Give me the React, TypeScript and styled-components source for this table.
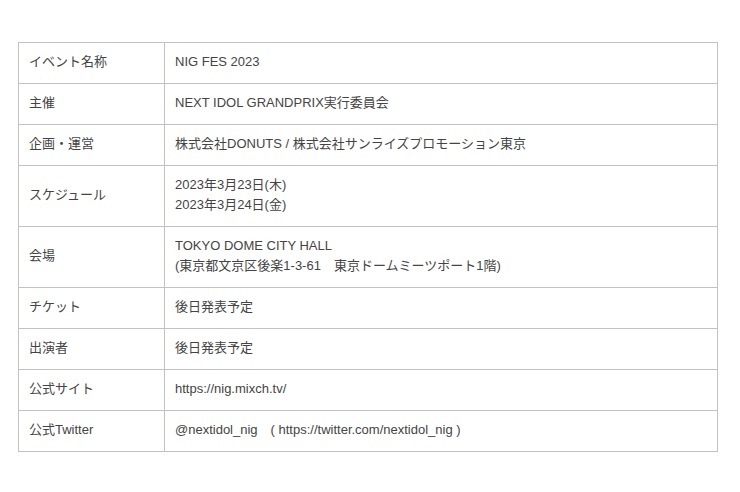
import React from 'react'
import styled, { createGlobalStyle } from 'styled-components'

const GlobalStyle = createGlobalStyle`
    html, body {
        margin: 0;
        padding: 0;
        background: #ffffff;
    }
    body {
        font-family: "Liberation Sans", Arial, "Noto Sans CJK JP", sans-serif;
        color: #444444;
    }
`

const Page = styled.div`
    padding: 42px 22px 0 18px;
`

const InfoTable = styled.table`
    width: 700px;
    border-collapse: collapse;
    font-size: 13px;
    line-height: 20px;
`

const HeadCell = styled.th`
    width: 125px;
    padding: 9px 10px 11px;
    border: 1px solid #c2c2c2;
    text-align: left;
    font-weight: normal;
    vertical-align: middle;
`

const DataCell = styled.td`
    padding: 9px 10px 11px;
    border: 1px solid #c2c2c2;
    text-align: left;
    vertical-align: middle;
`

type Row = { label: string; lines: string[] }

const rows: Row[] = [
    { label: 'イベント名称', lines: ['NIG FES 2023'] },
    { label: '主催', lines: ['NEXT IDOL GRANDPRIX実行委員会'] },
    { label: '企画・運営', lines: ['株式会社DONUTS / 株式会社サンライズプロモーション東京'] },
    { label: 'スケジュール', lines: ['2023年3月23日(木)', '2023年3月24日(金)'] },
    { label: '会場', lines: ['TOKYO DOME CITY HALL', '(東京都文京区後楽1-3-61\u3000東京ドームミーツポート1階)'] },
    { label: 'チケット', lines: ['後日発表予定'] },
    { label: '出演者', lines: ['後日発表予定'] },
    { label: '公式サイト', lines: ['https://nig.mixch.tv/'] },
    { label: '公式Twitter', lines: ['@nextidol_nig\u3000( https://twitter.com/nextidol_nig )'] },
]

function App() {
    return (
        <>
            <GlobalStyle />
            <Page>
                <InfoTable>
                    <tbody>
                        {rows.map((row) => (
                            <tr key={row.label}>
                                <HeadCell>{row.label}</HeadCell>
                                <DataCell>
                                    {row.lines.map((line, i) => (
                                        <React.Fragment key={i}>
                                            {i > 0 && <br />}
                                            {line}
                                        </React.Fragment>
                                    ))}
                                </DataCell>
                            </tr>
                        ))}
                    </tbody>
                </InfoTable>
            </Page>
        </>
    )
}

export default App
